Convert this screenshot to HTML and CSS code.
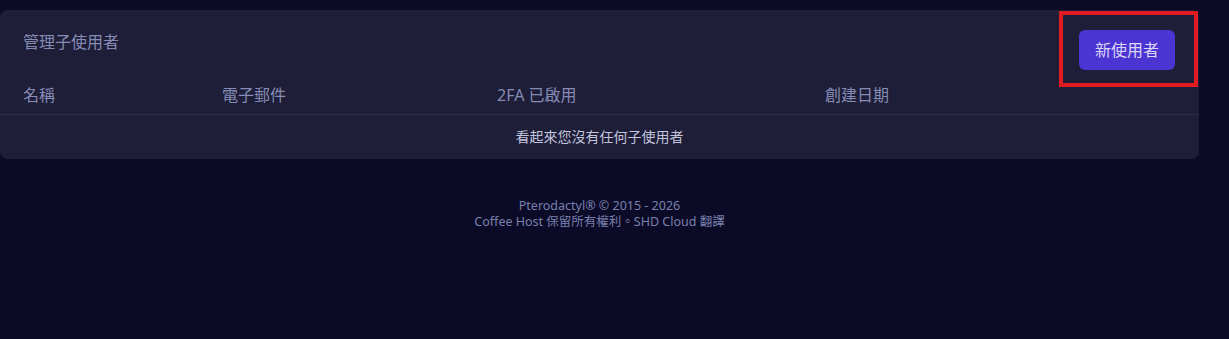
FILE: index.html
```html
<!DOCTYPE html>
<html lang="zh-Hant">
<head>
<meta charset="utf-8">
<title>管理子使用者</title>
<link rel="stylesheet" href="styles.css">
</head>
<body>
<div class="page">
  <section class="card">
    <div class="card-header">
      <h2 class="title">管理子使用者</h2>
      <div class="btn-wrap">
        <button class="btn-primary" type="button">新使用者</button>
        <span class="highlight"></span>
      </div>
    </div>
    <div class="table">
      <div class="thead">
        <div class="th">名稱</div>
        <div class="th">電子郵件</div>
        <div class="th">2FA 已啟用</div>
        <div class="th">創建日期</div>
      </div>
      <div class="empty">看起來您沒有任何子使用者</div>
    </div>
  </section>
  <footer class="footer">
    <p>Pterodactyl® © 2015 - 2026</p>
    <p>Coffee Host 保留所有權利。SHD Cloud 翻譯</p>
  </footer>
</div>
</body>
</html>
```

FILE: styles.css
```css
* { box-sizing: border-box; }

html, body {
  margin: 0;
  padding: 0;
  background: #0b0b28;
  font-family: "Noto Sans", "Noto Sans CJK TC", sans-serif;
}

.page {
  padding: 10px 30px 0 0;
}

.card {
  background: #1e1e38;
  border-radius: 8px;
}

.card-header {
  display: flex;
  justify-content: space-between;
  align-items: flex-start;
  padding: 20px 24px 0 23px;
}

.title {
  margin: 0;
  font-size: 16px;
  line-height: 24px;
  font-weight: 400;
  color: #858bb5;
}

.btn-wrap {
  position: relative;
}

.btn-primary {
  display: block;
  width: 96px;
  height: 40px;
  border: 0;
  border-radius: 6px;
  background: #4c34d2;
  color: #d9d6f7;
  font-family: inherit;
  font-size: 16px;
  line-height: 24px;
  padding: 0;
}

.highlight {
  position: absolute;
  left: -20px;
  top: -19px;
  right: -23px;
  bottom: -17px;
  border: 4px solid #e01b22;
  pointer-events: none;
}

.thead {
  display: grid;
  grid-template-columns: 199px 275px 328px 1fr;
  padding: 13px 0 7px 23px;
  border-bottom: 1px solid #2e2e48;
}

.th {
  font-size: 16px;
  line-height: 24px;
  color: #858bb5;
}

.empty {
  text-align: center;
  font-size: 14px;
  line-height: 20px;
  color: #c3c5df;
  padding: 12px 0 12px;
}

.footer {
  margin-top: 39px;
  text-align: center;
  font-size: 12.5px;
  line-height: 16px;
  color: #7a80ad;
}

.footer p {
  margin: 0;
}
```
